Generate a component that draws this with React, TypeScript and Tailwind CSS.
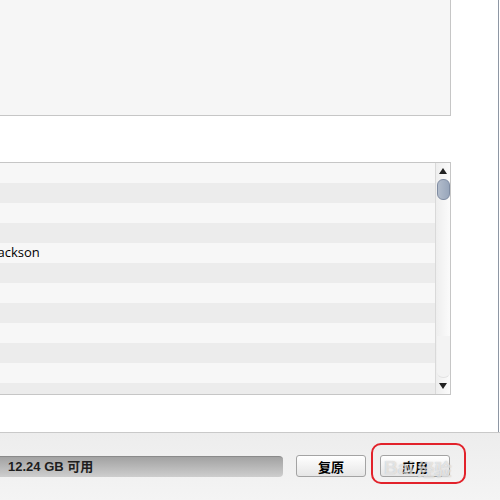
import React from "react";

// ── Striped list rows ────────────────────────────────────────────────────────

const rows = ["", "", "", "", "Jackson", "", "", "", "", "", "", ""];

const ListRows = () => (
  <div className="flex-1 overflow-hidden">
    {rows.map((name, i) => (
      <div
        key={i}
        className={`h-[20px] flex items-center overflow-hidden ${
          i % 2 === 0 ? "bg-[#f7f7f7]" : "bg-[#ececec]"
        }`}
      >
        {name && (
          <span className="-ml-[6px] text-[13px] text-black whitespace-nowrap font-['Open_Sans',sans-serif]">
            {name}
          </span>
        )}
      </div>
    ))}
  </div>
);

// ── Scrollbar ────────────────────────────────────────────────────────────────

const Scrollbar = () => (
  <div className="w-[15px] border-l border-[#d9d9d9] bg-linear-to-r from-[#eeeeee] to-[#fbfbfb] flex flex-col items-center">
    <div className="h-[16px] flex items-center justify-center">
      <div className="w-0 h-0 border-l-[4px] border-r-[4px] border-b-[6px] border-l-transparent border-r-transparent border-b-[#222]" />
    </div>
    <div className="w-[13px] h-[21px] rounded-[6px] border border-[#7f8ca2] bg-linear-to-r from-[#b2bccb] to-[#98a6bb]" />
    <div className="flex-1 w-[13px] mt-[136px] rounded-b-[6px] bg-[#f3f3f3] border-b border-[#e2e2e2]" />
    <div className="h-[16px] flex items-center justify-center">
      <div className="w-0 h-0 border-l-[4px] border-r-[4px] border-t-[6px] border-l-transparent border-r-transparent border-t-[#222]" />
    </div>
  </div>
);

// ── Button ───────────────────────────────────────────────────────────────────

const Button = ({ label }: { label: string }) => (
  <div className="w-[70px] h-[22px] rounded-[3px] border border-[#a3a3a3] bg-linear-to-b from-[#ffffff] to-[#e6e6e6] flex items-center justify-center">
    <span className="text-[13px] font-bold text-black font-['Noto_Sans_CJK_SC',sans-serif] leading-none">
      {label}
    </span>
  </div>
);

// ── App ──────────────────────────────────────────────────────────────────────

export default function App() {
  return (
    <div className="w-[500px] h-[500px] bg-white flex flex-col overflow-hidden font-['Liberation_Sans',sans-serif]">
      {/* ── Main area ── */}
      <div className="h-[432px] flex">
        <div className="w-[498px] flex flex-col">
          {/* Upper panel */}
          <div className="w-[451px] h-[116px] bg-[#f6f6f6] border-r border-b border-[#c6c6c6]" />

          {/* List */}
          <div className="w-[451px] h-[233px] mt-[46px] border-t border-r border-b border-[#c6c6c6] flex">
            <ListRows />
            <Scrollbar />
          </div>
        </div>
        <div className="w-px bg-[#8e97a4]" />
        <div className="w-px bg-white" />
      </div>

      {/* ── Bottom bar ── */}
      <div className="relative flex-1 border-t border-[#c9c9c9] bg-linear-to-b from-[#ededed] to-[#f4f4f4] pt-[22px]">
        <div className="flex items-center">
          {/* Capacity bar */}
          <div className="w-[283px] h-[21px] rounded-r-[4px] border-t border-[#8a8a8a] bg-linear-to-b from-[#a2a2a2] to-[#cecece] flex items-center pl-[8px]">
            <span className="text-[13px] font-bold text-[#1e1e1e] font-['Liberation_Sans','Noto_Sans_CJK_SC',sans-serif]">
              12.24 GB 可用
            </span>
          </div>

          <div className="ml-[13px] flex gap-[14px]">
            <Button label="复原" />
            <Button label="应用" />
          </div>
        </div>

        {/* Watermark */}
        <div className="absolute left-[384px] top-[21px] flex items-center gap-[4px] text-white/60 text-[19px] font-bold pointer-events-none [text-shadow:0_0_1px_rgba(120,120,120,0.5)]">
          <span>Bai</span>
          <span className="font-['Noto_Sans_CJK_SC',sans-serif] text-[17px]">经验</span>
        </div>

        {/* Red highlight */}
        <div className="absolute left-[371px] top-[10px] w-[95px] h-[41px] rounded-[10px] border-[2.5px] border-[#e2222b] pointer-events-none" />
      </div>
    </div>
  );
}
